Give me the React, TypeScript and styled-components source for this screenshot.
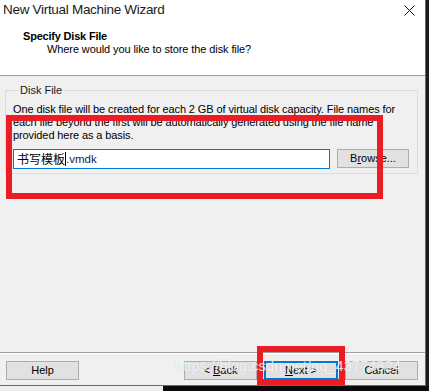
import React from "react";
import styled, { createGlobalStyle } from "styled-components";

const GlobalStyle = createGlobalStyle`
  html, body {
    margin: 0;
    padding: 0;
    background: #000;
  }
  body {
    font-family: "Liberation Sans", Arial, sans-serif;
    font-size: 11px;
    color: #000;
  }
`;

const Screen = styled.div`
  position: relative;
  width: 429px;
  height: 391px;
  overflow: hidden;
  display: flex;
  flex-direction: column;
  background: #111;
`;

const WindowRow = styled.div`
  display: flex;
  height: 386px;
`;

const Window = styled.div`
  width: 425px;
  height: 385px;
  display: flex;
  flex-direction: column;
  background: #f0f0f0;
  border-right: 1px solid #1e7bd6;
  border-bottom: 1px solid #1e7bd6;
`;

const DarkEdge = styled.div`
  flex: 1;
  background: #1b1b1b;
`;

const BottomStrip = styled.div`
  display: flex;
  height: 5px;
`;

const Behind = styled.div<{ $w?: number; $bg: string }>`
  width: ${(p) => (p.$w ? `${p.$w}px` : "auto")};
  flex: ${(p) => (p.$w ? "none" : "1")};
  background: ${(p) => p.$bg};
`;

// header: title bar + page heading
const Header = styled.div`
  height: 75px;
  background: #fff;
  border-bottom: 1px solid #a0a0a0;
  display: flex;
  flex-direction: column;
`;

const TitleBar = styled.div`
  height: 22px;
  display: flex;
  align-items: flex-start;
  justify-content: space-between;
  padding: 0 10px 0 3px;
`;

const Title = styled.span`
  font-size: 13.5px;
  line-height: 19px;
  letter-spacing: -0.3px;
  color: #1a1a1a;
`;

const CloseIcon = styled.svg`
  margin-top: 5px;
`;

const Heading = styled.div`
  margin-top: 8px;
  padding-left: 23px;
  font-weight: bold;
  font-size: 11px;
  line-height: 13px;
  letter-spacing: -0.2px;
`;

const SubHeading = styled.div`
  padding-left: 47px;
  font-size: 11px;
  line-height: 13px;
  letter-spacing: -0.1px;
`;

const Body = styled.div`
  flex: 1;
  padding: 8px 0 0 5px;
`;

const GroupBox = styled.fieldset`
  width: 413px;
  margin: 0;
  padding: 0 8px 4px 7px;
  border: 1px solid #dcdcdc;
  box-sizing: border-box;
`;

const Legend = styled.legend`
  margin-left: 5px;
  padding: 0 2px;
  font-size: 11px;
  line-height: 13px;
  color: #1a1a1a;
`;

const Note = styled.p`
  margin: 6px 0 7px;
  font-size: 11px;
  line-height: 13px;
  letter-spacing: -0.1px;
  white-space: nowrap;
`;

const InputRow = styled.div`
  display: flex;
  gap: 7px;
`;

const TextBox = styled.div`
  width: 317px;
  height: 20px;
  box-sizing: border-box;
  border: 1px solid #0078d7;
  background: #fff;
  padding: 0 3px;
  display: flex;
  align-items: center;
`;

const Cjk = styled.span`
  font-family: "Noto Sans CJK SC", sans-serif;
  font-size: 12px;
  line-height: 14px;
`;

const Caret = styled.span`
  display: inline-block;
  width: 1px;
  height: 14px;
  background: #000;
`;

const Ext = styled.span`
  font-size: 11.5px;
  color: #1c1c54;
`;

const Button = styled.button<{ $default?: boolean; $w?: number }>`
  width: ${(p) => p.$w ?? 73}px;
  height: 19px;
  box-sizing: border-box;
  margin: 0;
  padding: 0;
  background: #e1e1e1;
  border: ${(p) => (p.$default ? "2px solid #0078d7" : "1px solid #adadad")};
  font-family: "Liberation Sans", Arial, sans-serif;
  font-size: 11px;
  color: #000;
  line-height: 15px;
`;

const Footer = styled.div`
  border-top: 1px solid #a0a0a0;
  box-shadow: inset 0 1px 0 #fff;
  height: 33px;
  padding: 8px 0 0 6px;
  box-sizing: border-box;
  display: flex;
`;

const NavButtons = styled.div`
  margin-left: auto;
  margin-right: 7px;
  display: flex;
  gap: 7px;
`;

const Mark = styled.span`
  text-decoration: underline;
`;

const Annotation = styled.div<{ $x: number; $y: number; $w: number; $h: number }>`
  position: absolute;
  left: ${(p) => p.$x}px;
  top: ${(p) => p.$y}px;
  width: ${(p) => p.$w}px;
  height: ${(p) => p.$h}px;
  box-sizing: border-box;
  border: 6px solid #ec1c24;
  pointer-events: none;
`;

const Watermark = styled.div`
  position: absolute;
  left: 175px;
  top: 358px;
  font-family: "Liberation Sans", Arial, sans-serif;
  font-size: 14.5px;
  letter-spacing: 0.1px;
  color: rgba(255, 255, 255, 0.8);
  text-shadow: 0 0 1px rgba(120, 120, 120, 0.3);
  pointer-events: none;
  white-space: nowrap;
`;

export default function App() {
  return (
    <>
      <GlobalStyle />
      <Screen>
        <WindowRow>
          <Window>
            <Header>
              <TitleBar>
                <Title>New Virtual Machine Wizard</Title>
                <CloseIcon width="11" height="11" viewBox="0 0 11 11">
                  <path d="M0.5 0.5 L10.5 10.5 M10.5 0.5 L0.5 10.5" stroke="#111" strokeWidth="1" />
                </CloseIcon>
              </TitleBar>
              <Heading>Specify Disk File</Heading>
              <SubHeading>Where would you like to store the disk file?</SubHeading>
            </Header>
            <Body>
              <GroupBox>
                <Legend>Disk File</Legend>
                <Note>
                  One disk file will be created for each 2 GB of virtual disk capacity. File names for
                  <br />
                  each file beyond the first will be automatically generated using the file name
                  <br />
                  provided here as a basis.
                </Note>
                <InputRow>
                  <TextBox>
                    <Cjk>书写模板</Cjk>
                    <Caret />
                    <Ext>.vmdk</Ext>
                  </TextBox>
                  <Button $w={72}>
                    B<Mark>r</Mark>owse...
                  </Button>
                </InputRow>
              </GroupBox>
            </Body>
            <Footer>
              <Button>Help</Button>
              <NavButtons>
                <Button>
                  &lt; <Mark>B</Mark>ack
                </Button>
                <Button $default $w={74}>
                  <Mark>N</Mark>ext &gt;
                </Button>
                <Button>Cancel</Button>
              </NavButtons>
            </Footer>
          </Window>
          <DarkEdge />
        </WindowRow>
        <BottomStrip>
          <Behind $w={163} $bg="#eeeeee" />
          <Behind $bg="#0a0a0a" />
        </BottomStrip>
        <Annotation $x={6} $y={115} $w={377} $h={84} />
        <Annotation $x={257} $y={346} $w={88} $h={39} />
        <Watermark>https://blog.csdn.net/qq_43774824</Watermark>
      </Screen>
    </>
  );
}
